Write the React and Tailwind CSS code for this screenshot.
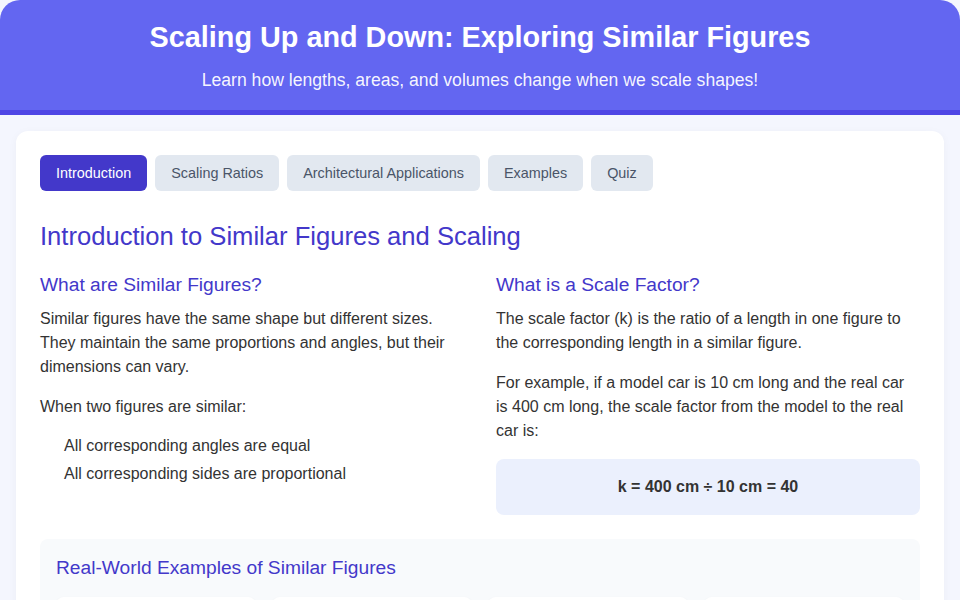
import React from "react";

const tabs = ["Introduction", "Scaling Ratios", "Architectural Applications", "Examples", "Quiz"];

export default function App() {
  return (
    <div className="min-h-[600px] bg-[#f4f6fe] text-[#333] [font-family:'Liberation_Sans',Arial,sans-serif]">
      <header className="rounded-t-[20px] border-b-[5px] border-[#4f46e5] bg-[#6366f1] px-6 pt-[19px] pb-[17px] text-center text-white">
        <h1 className="text-[28.8px] font-bold leading-[36px]">Scaling Up and Down: Exploring Similar Figures</h1>
        <p className="mt-[12px] text-[17.6px] leading-[26px] text-white/95">
          Learn how lengths, areas, and volumes change when we scale shapes!
        </p>
      </header>

      <main className="px-4 pt-4">
        <section className="rounded-xl bg-white p-6 shadow-[0_2px_10px_rgba(0,0,0,0.04)]">
          <nav className="flex gap-2">
            {tabs.map((t, i) => (
              <button
                key={t}
                className={
                  i === 0
                    ? "h-9 rounded-md bg-[#4338ca] px-4 pt-px text-[14.4px] text-white"
                    : "h-9 rounded-md bg-[#e2e8f0] px-4 pt-px text-[14.4px] text-[#4a5568]"
                }
              >
                {t}
              </button>
            ))}
          </nav>

          <h2 className="mt-[27px] text-[25.6px] leading-[36px] text-[#4338ca]">
            Introduction to Similar Figures and Scaling
          </h2>

          <div className="mt-4 grid grid-cols-2 gap-8">
            <div>
              <h3 className="text-[19.2px] leading-[30px] text-[#4338ca]">What are Similar Figures?</h3>
              <p className="mt-[7px] text-base leading-6">
                Similar figures have the same shape but different sizes. They maintain the same proportions and angles, but their dimensions can vary.
              </p>
              <p className="mt-4 text-base leading-6">When two figures are similar:</p>
              <ul className="mt-[15px] pl-6 text-base leading-6">
                <li className="mb-1">All corresponding angles are equal</li>
                <li>All corresponding sides are proportional</li>
              </ul>
            </div>
            <div>
              <h3 className="text-[19.2px] leading-[30px] text-[#4338ca]">What is a Scale Factor?</h3>
              <p className="mt-[7px] text-base leading-6">
                The scale factor (k) is the ratio of a length in one figure to the corresponding length in a similar figure.
              </p>
              <p className="mt-4 text-base leading-6">
                For example, if a model car is 10 cm long and the real car is 400 cm long, the scale factor from the model to the real car is:
              </p>
              <div className="mt-4 rounded-lg bg-[#ebf0fd] py-4 text-center text-base font-bold leading-6 text-[#333]">
                k = 400 cm ÷ 10 cm = 40
              </div>
            </div>
          </div>

          <div className="mt-6 rounded-lg bg-[#f8fafc] px-4 pt-[14px] pb-4">
            <h3 className="text-[19.2px] leading-[29px] text-[#4338ca]">Real-World Examples of Similar Figures</h3>
            <div className="mt-[15px] grid grid-cols-4 gap-4">
              {["Maps", "Models", "Photographs", "Blueprints"].map((c) => (
                <div key={c} className="h-32 rounded-lg bg-white shadow-[0_1px_3px_rgba(0,0,0,0.05)]" />
              ))}
            </div>
          </div>
        </section>
      </main>
    </div>
  );
}
